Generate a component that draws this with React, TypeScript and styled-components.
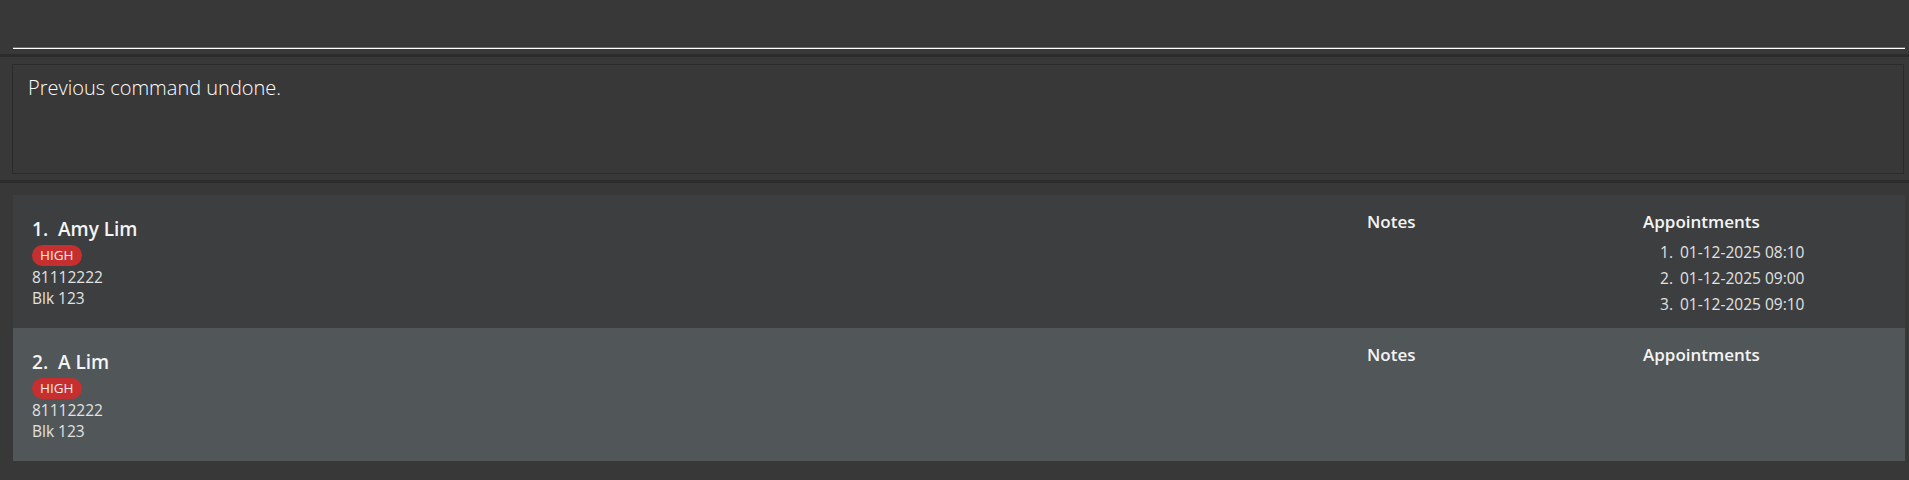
import React from 'react'
import styled, { createGlobalStyle } from 'styled-components'

const GlobalStyle = createGlobalStyle`
  html, body {
    margin: 0;
    padding: 0;
    background: #383838;
  }
  body {
    font-family: "Open Sans", "Noto Sans", sans-serif;
  }
`

interface Person {
  name: string
  tags: string[]
  phone: string
  address: string
  appointments: string[]
}

const persons: Person[] = [
  {
    name: 'Amy Lim',
    tags: ['HIGH'],
    phone: '81112222',
    address: 'Blk 123',
    appointments: ['01-12-2025 08:10', '01-12-2025 09:00', '01-12-2025 09:10'],
  },
  {
    name: 'A Lim',
    tags: ['HIGH'],
    phone: '81112222',
    address: 'Blk 123',
    appointments: [],
  },
]

const App: React.FC = () => {
  return (
    <>
      <GlobalStyle />
      <Window>
        <CommandBar>
          <CommandInput type="text" defaultValue="" />
        </CommandBar>
        <Divider />
        <ResultPanel>
          <ResultBox>Previous command undone.</ResultBox>
        </ResultPanel>
        <Divider />
        <ListPanel>
          {persons.map((p, i) => (
            <Card key={p.name} odd={i % 2 === 0}>
              <MainCol>
                <Name>
                  {i + 1}.&nbsp; {p.name}
                </Name>
                <Tags>
                  {p.tags.map(t => (
                    <Tag key={t}>{t}</Tag>
                  ))}
                </Tags>
                <Small>{p.phone}</Small>
                <Small>{p.address}</Small>
              </MainCol>
              <SideCol>
                <Heading>Notes</Heading>
              </SideCol>
              <SideCol>
                <Heading>Appointments</Heading>
                <ApptList>
                  {p.appointments.map((a, j) => (
                    <ApptItem key={a}>
                      <ApptIndex>{j + 1}.</ApptIndex>
                      {a}
                    </ApptItem>
                  ))}
                </ApptList>
              </SideCol>
            </Card>
          ))}
        </ListPanel>
      </Window>
    </>
  )
}

const Window = styled.div`
  width: 1909px;
  height: 480px;
  background: #383838;
  display: flex;
  flex-direction: column;
  overflow: hidden;
`

const CommandBar = styled.div`
  height: 54px;
  box-sizing: border-box;
  padding: 0 4px 5px 13px;
  display: flex;
  align-items: flex-end;
`

const CommandInput = styled.input`
  flex: 1;
  height: 30px;
  box-sizing: border-box;
  background: transparent;
  border: none;
  border-bottom: 1px solid #ffffff;
  box-shadow: 0 -1px 0 #6a6a6a inset;
  outline: none;
  color: #ffffff;
  font-family: "Open Sans", sans-serif;
  font-size: 16px;
`

const Divider = styled.div`
  height: 3px;
  background: #2c2c2c;
  flex-shrink: 0;
`

const ResultPanel = styled.div`
  padding: 7px 5px 6px 12px;
`

const ResultBox = styled.div`
  height: 110px;
  box-sizing: border-box;
  border: 1px solid #2b2b2b;
  padding: 9px 15px;
  color: #ffffff;
  font-size: 20px;
  font-weight: 300;
  line-height: 28px;
`

const ListPanel = styled.div`
  padding: 12px 4px 0 13px;
  display: flex;
  flex-direction: column;
`

const Card = styled.div<{ odd: boolean }>`
  height: 133px;
  box-sizing: border-box;
  background: ${p => (p.odd ? '#3c3e3f' : '#515658')};
  display: grid;
  grid-template-columns: 1fr 276px 262px;
  padding: 15px 0 0 19px;
`

const MainCol = styled.div`
  padding-top: 7px;
  display: flex;
  flex-direction: column;
`

const Name = styled.div`
  color: #f4f4f4;
  font-size: 19px;
  font-weight: 600;
  line-height: 24px;
`

const Tags = styled.div`
  display: flex;
  gap: 4px;
  margin: 4px 0 1px;
`

const Tag = styled.span`
  height: 21px;
  padding: 0 8px;
  border-radius: 11px;
  background: #c62f2f;
  color: #fbe9e9;
  font-size: 13.5px;
  line-height: 21px;
`

const Small = styled.div`
  color: #e2e2e2;
  font-size: 15.5px;
  line-height: 21px;
`

const SideCol = styled.div`
  display: flex;
  flex-direction: column;
`

const Heading = styled.div`
  color: #f4f4f4;
  font-size: 17px;
  font-weight: 600;
  line-height: 24px;
`

const ApptList = styled.div`
  margin-top: 5px;
  padding-left: 17px;
  display: flex;
  flex-direction: column;
`

const ApptItem = styled.div`
  display: flex;
  color: #e2e2e2;
  font-size: 15.5px;
  line-height: 26px;
`

const ApptIndex = styled.span`
  width: 20px;
`

export default App
